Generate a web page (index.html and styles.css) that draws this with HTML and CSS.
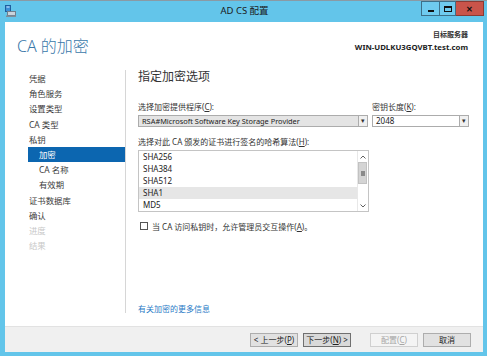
FILE: index.html
```html
<!DOCTYPE html>
<html lang="zh-CN">
<head>
<meta charset="utf-8">
<title>AD CS 配置</title>
<link rel="stylesheet" href="styles.css">
</head>
<body>
<div class="window">
  <div class="titlebar">
    <svg class="app-icon" width="11" height="12" viewBox="0 0 11 12">
      <rect x="0.5" y="0.5" width="5" height="6" fill="#3b8fd6" stroke="#1f5f9e"/>
      <rect x="1.5" y="1.5" width="3" height="1" fill="#d8ecff"/>
      <rect x="2.5" y="6.5" width="8" height="4" fill="#c9d3dc" stroke="#6f7f8c"/>
      <rect x="1" y="10.5" width="10" height="1.5" fill="#7d8c99"/>
    </svg>
    <div class="title">AD CS 配置</div>
    <div class="controls">
      <div class="wbtn min"><span class="min-glyph"></span></div>
      <div class="wbtn max"><span class="max-glyph"></span></div>
      <div class="wbtn close">✕</div>
    </div>
  </div>
  <div class="panel">
    <div class="header">
      <h1 class="page-title">CA 的加密</h1>
      <div class="target">
        <div class="target-label">目标服务器</div>
        <div class="target-name">WIN-UDLKU3GQVBT.test.com</div>
      </div>
    </div>
    <div class="body">
      <nav class="nav">
        <div class="nav-item">凭据</div>
        <div class="nav-item">角色服务</div>
        <div class="nav-item">设置类型</div>
        <div class="nav-item">CA 类型</div>
        <div class="nav-item">私钥</div>
        <div class="nav-item sub selected">加密</div>
        <div class="nav-item sub">CA 名称</div>
        <div class="nav-item sub">有效期</div>
        <div class="nav-item">证书数据库</div>
        <div class="nav-item">确认</div>
        <div class="nav-item disabled">进度</div>
        <div class="nav-item disabled">结果</div>
      </nav>
      <main class="main">
        <h2 class="section-title">指定加密选项</h2>
        <div class="row1">
          <div class="field">
            <div class="label">选择加密提供程序(<u>C</u>):</div>
            <div class="combo readonly">
              <span class="combo-text latin">RSA#Microsoft Software Key Storage Provider</span>
              <span class="combo-arrow">▾</span>
            </div>
          </div>
          <div class="field">
            <div class="label">密钥长度(<u>K</u>):</div>
            <div class="combo">
              <span class="combo-text">2048</span>
              <span class="combo-arrow">▾</span>
            </div>
          </div>
        </div>
        <div class="label label2">选择对此 CA 颁发的证书进行签名的哈希算法(<u>H</u>):</div>
        <div class="listbox">
          <div class="list-items">
            <div class="list-item">SHA256</div>
            <div class="list-item">SHA384</div>
            <div class="list-item">SHA512</div>
            <div class="list-item active">SHA1</div>
            <div class="list-item">MD5</div>
          </div>
          <div class="scrollbar">
            <div class="sb-btn">
              <svg width="6" height="4" viewBox="0 0 6 4"><path d="M0.5 3.5 L3 1 L5.5 3.5" fill="none" stroke="#606060" stroke-width="1"/></svg>
            </div>
            <div class="sb-thumb"><span class="grip"></span></div>
            <div class="sb-track"></div>
            <div class="sb-btn">
              <svg width="6" height="4" viewBox="0 0 6 4"><path d="M0.5 0.5 L3 3 L5.5 0.5" fill="none" stroke="#606060" stroke-width="1"/></svg>
            </div>
          </div>
        </div>
        <div class="check-row">
          <span class="checkbox"></span>
          <span class="check-text">当 CA 访问私钥时，允许管理员交互操作(<u>A</u>)。</span>
        </div>
        <a class="more-link" href="#">有关加密的更多信息</a>
      </main>
    </div>
    <div class="footer">
      <div class="btn">&lt; 上一步(<u>P</u>)</div>
      <div class="btn default">下一步(<u>N</u>) &gt;</div>
      <div class="btn disabled spaced">配置(<u>C</u>)</div>
      <div class="btn">取消</div>
    </div>
  </div>
</div>
</body>
</html>
```

FILE: styles.css
```css
* {
  box-sizing: border-box;
}

html, body {
  margin: 0;
  padding: 0;
}

body {
  width: 487px;
  height: 356px;
  overflow: hidden;
  font-family: "Noto Sans", "Noto Sans CJK SC", sans-serif;
  font-size: 8px;
  color: #333;
  background: #63c5ea;
}

.window {
  width: 487px;
  height: 356px;
  display: flex;
  flex-direction: column;
  background: #63c5ea;
  border-top: 1px solid #8a9aa4;
}

.titlebar {
  height: 21px;
  display: grid;
  grid-template-columns: 1fr auto 1fr;
  align-items: start;
  padding: 0 3px 0 5px;
}

.app-icon {
  margin-top: 4px;
  justify-self: start;
}

.title {
  font-size: 9.5px;
  line-height: 12px;
  margin-top: 4px;
  color: #1b1b1b;
}

.controls {
  justify-self: end;
  display: flex;
  margin-top: 0;
}

.wbtn {
  height: 15px;
  display: flex;
  align-items: center;
  justify-content: center;
  border: 1px solid #3d6f88;
  background: #6fcbef;
}

.wbtn.min {
  width: 18px;
  border-right: none;
}

.wbtn.max {
  width: 17px;
}

.wbtn.close {
  width: 28px;
  border-left: none;
  background: #c9544a;
  border-color: #8a3a33;
  color: #111;
  font-size: 8px;
  font-weight: bold;
  line-height: 1;
}

.min-glyph {
  width: 6px;
  height: 2px;
  background: #111;
  margin-top: 5px;
}

.max-glyph {
  width: 8px;
  height: 6px;
  border: 1px solid #111;
  border-top-width: 2px;
}

.panel {
  flex: 1;
  margin: 0 4px 4px 5px;
  background: #fff;
  display: flex;
  flex-direction: column;
}

.header {
  height: 44px;
  display: flex;
  justify-content: space-between;
  align-items: flex-start;
  padding: 7px 15px 0 12px;
}

.page-title {
  margin: 7px 0 0 0;
  font-size: 16px;
  line-height: 20px;
  font-weight: 300;
  color: #3a78a9;
}

.target {
  text-align: right;
}

.target-label {
  font-size: 7px;
  line-height: 12px;
  font-weight: bold;
  color: #333;
}

.target-name {
  font-size: 7.8px;
  line-height: 12px;
  font-weight: bold;
  color: #222;
}

.body {
  height: 260px;
  display: flex;
}

.nav {
  width: 121px;
  flex: none;
  margin: 4px 0 13px 0;
  padding-top: 1px;
  border-right: 1px solid #d6d6d6;
}

.nav-item {
  margin-left: 23px;
  padding-left: 1px;
  height: 15.2px;
  line-height: 15.2px;
  font-size: 8.4px;
  color: #3a3a3a;
  white-space: nowrap;
}

.nav-item.sub {
  padding-left: 11px;
}

.nav-item.selected {
  background: #0c66b0;
  color: #fff;
}

.nav-item.disabled {
  color: #c8c8c8;
}

.main {
  flex: 1;
  display: flex;
  flex-direction: column;
  padding: 3px 14px 0 12px;
}

.section-title {
  margin: 0;
  font-size: 12px;
  line-height: 16px;
  font-weight: 400;
  color: #333;
}

.row1 {
  margin-top: 16px;
  display: grid;
  grid-template-columns: 1fr 97px;
  column-gap: 4px;
}

.label {
  line-height: 12px;
  font-size: 8px;
  color: #333;
  white-space: nowrap;
}

.combo {
  margin-top: 2px;
  height: 12px;
  display: flex;
  border: 1px solid #acacac;
  background: #fff;
}

.combo.readonly {
  background: #e4e4e4;
}

.combo-text {
  flex: 1;
  padding-left: 3px;
  line-height: 10px;
  font-size: 8px;
  color: #222;
  white-space: nowrap;
  overflow: hidden;
}

.combo-text.latin {
  font-size: 7.4px;
}

.combo-arrow {
  width: 9px;
  border-left: 1px solid #acacac;
  background: #f0f0f0;
  font-size: 7px;
  line-height: 10px;
  text-align: center;
  color: #333;
}

.label2 {
  margin-top: 9px;
}

.listbox {
  margin-top: 2px;
  width: 231px;
  height: 62px;
  border: 1px solid #c4c4c4;
  display: flex;
}

.list-items {
  flex: 1;
}

.list-item {
  height: 12px;
  line-height: 12px;
  padding-left: 4px;
  font-size: 8px;
  color: #222;
}

.list-item.active {
  background: #e6e6e6;
}

.scrollbar {
  width: 10px;
  margin-right: 1px;
  display: flex;
  flex-direction: column;
  border-left: 1px solid #e8e8e8;
}

.sb-btn {
  height: 11px;
  display: flex;
  align-items: center;
  justify-content: center;
}

.sb-thumb {
  height: 22px;
  background: #d4d4d4;
  border: 1px solid #c2c2c2;
  display: flex;
  align-items: center;
  justify-content: center;
}

.grip {
  width: 4px;
  height: 5px;
  background: #8a8a8a;
}

.sb-track {
  flex: 1;
}

.check-row {
  margin-top: 8px;
  display: flex;
  align-items: center;
  height: 12px;
}

.checkbox {
  width: 8px;
  height: 8px;
  margin-left: 2px;
  border: 1px solid #555;
  background: #fff;
}

.check-text {
  margin-left: 4px;
  font-size: 8px;
  color: #333;
  white-space: nowrap;
}

.more-link {
  margin-top: auto;
  margin-bottom: 11px;
  line-height: 12px;
  font-size: 8px;
  color: #2a7bc6;
  text-decoration: none;
  align-self: flex-start;
}

.footer {
  height: 26px;
  background: #f0f0f0;
  border-top: 1px solid #e2e2e2;
  display: flex;
  justify-content: flex-end;
  align-items: flex-start;
  padding: 6px 12px 0 0;
  gap: 5px;
}

.btn {
  width: 48px;
  height: 14px;
  border: 1px solid #adadad;
  background: #e1e1e1;
  font-size: 8px;
  line-height: 12px;
  text-align: center;
  color: #222;
  white-space: nowrap;
}

.btn.default {
  border-color: #707070;
  background: #d9d9d9;
}

.btn.disabled {
  border-color: #d0d0d0;
  background: #f4f4f4;
  color: #a6a6a6;
}

.btn.spaced {
  margin-left: 14px;
}

u {
  text-decoration: underline;
}
```
